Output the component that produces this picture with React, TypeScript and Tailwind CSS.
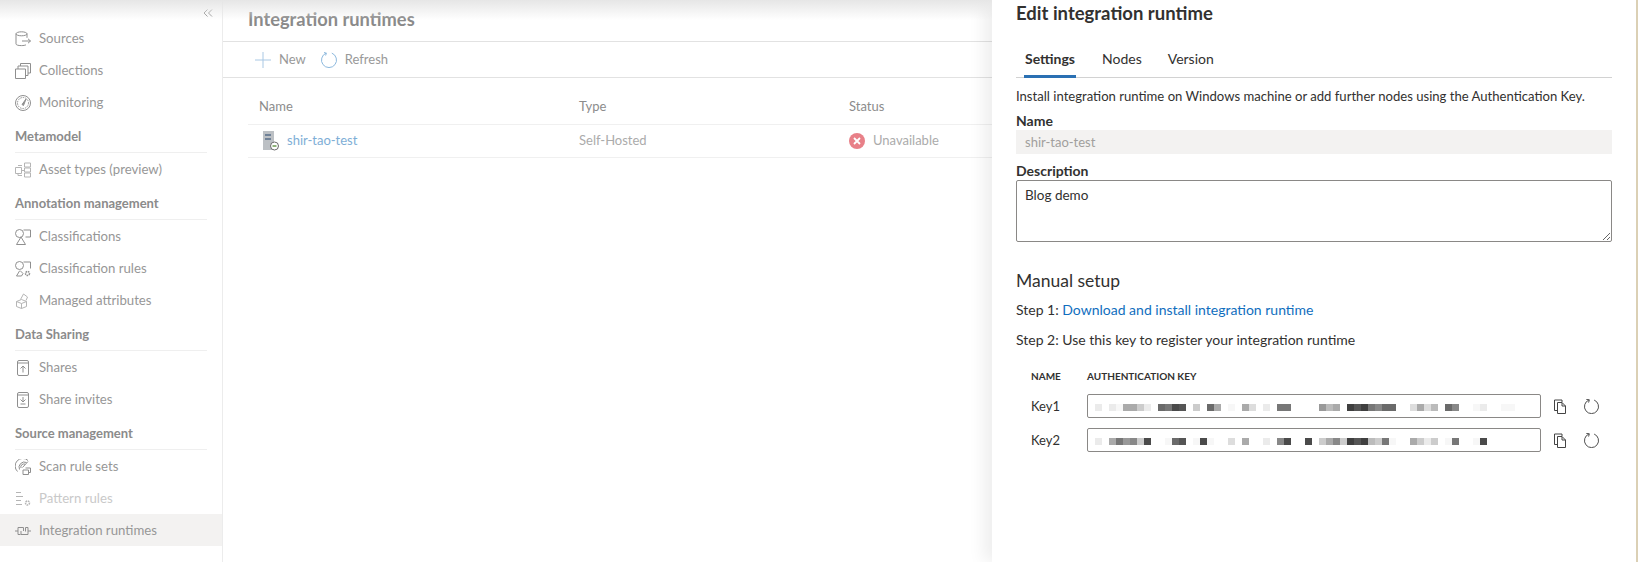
import { ReactNode } from "react";

const stroke = {
  fill: "none",
  stroke: "currentColor",
  strokeWidth: 1,
};

function Icon({ children, className = "" }: { children: ReactNode; className?: string }) {
  return (
    <svg viewBox="0 0 16 16" className={`h-4 w-4 shrink-0 ${className}`} {...stroke}>
      {children}
    </svg>
  );
}

const SourcesIcon = () => (
  <Icon>
    <ellipse cx="6.500" cy="2.800" rx="5.500" ry="2" />
    <path d="M1 2.800v10c0 1.200 2 1.800 5.500 1.800 2 0 3.600-.3 4.500-.8M12 2.800v4M7 10h8.500M13 7.800l2.500 2.200-2.500 2.200" />
  </Icon>
);
const CollectionsIcon = () => (
  <Icon>
    <path d="M.5 6h10v9.500H.5zM3 6V3h10v9.500h-2.500M5.500 3V.5h10v9.500H13" />
  </Icon>
);
const MonitoringIcon = () => (
  <Icon>
    <circle cx="8" cy="8" r="7.500" />
    <circle cx="8" cy="8" r="5.500" strokeDasharray="1.500 1" />
    <path d="M7 9.500l4-5.500-2.500 6.500z" fill="currentColor" />
  </Icon>
);
const AssetTypesIcon = () => (
  <Icon>
    <path d="M.5 5.500h6v6h-6zM3 3.500h4M9.500 1h6v4h-6zM9.500 6h6v4h-6zM9.500 11h6v4h-6zM6.500 8.500h3M3 11.500v2h4" />
  </Icon>
);
const ClassificationsIcon = () => (
  <Icon>
    <circle cx="4.500" cy="4.500" r="4" />
    <path d="M8.500 1h7v7h-5M6 8l4.500 7.500h-9z" />
  </Icon>
);
const ClassificationRulesIcon = () => (
  <Icon>
    <circle cx="4.500" cy="4.500" r="4" />
    <path d="M8.500 1h7v6.500M5 9.500l3 3-1.500 2.500h-5l3-5" />
    <circle cx="12.500" cy="12.500" r="2" strokeDasharray="1.500 .7" strokeWidth="1.500" />
  </Icon>
);
const ManagedAttributesIcon = () => (
  <Icon>
    <path d="M1.500 8.500l5-2 5 2v5l-5 2-5-2zM1.500 8.500l5 2 5-2M6.500 10.500v5M5.500 6.500l3-5.500 4 3-1.500 3.500" />
  </Icon>
);
const SharesIcon = () => (
  <Icon>
    <rect x="2.500" y=".5" width="11" height="15" rx="1.500" />
    <path d="M2.500 3h11M8 12.500V6M5.500 8.500L8 6l2.500 2.500" />
  </Icon>
);
const ShareInvitesIcon = () => (
  <Icon>
    <rect x="2.500" y=".5" width="11" height="15" rx="1.500" />
    <path d="M2.500 3h11M8 5v5M5.500 7.500L8 10l2.500-2.500M5.500 12h5" />
  </Icon>
);
const ScanRuleSetsIcon = () => (
  <Icon>
    <path d="M13 1.500A7.500 7.500 0 0 0 2.500 12.500M11.500 3.500A5.300 5.300 0 0 0 4.500 10.500M10 5.200A3 3 0 0 0 6 9M7.500 8.500L13 2.500" />
    <path d="M8 11h5.500v4.500H8zM10.500 9h5v4.500h-2" />
  </Icon>
);
const PatternRulesIcon = () => (
  <Icon>
    <path d="M1 1.500h5M1 5.500h7M1 9.500h5M1 13.500h6" />
    <circle cx="12.500" cy="12" r="2" strokeDasharray="1.500 .7" strokeWidth="1.500" />
  </Icon>
);
const RuntimesIcon = () => (
  <Icon>
    <path d="M0 8h3M3 4.500v7h2.500M3 4.500h5.500V8M6 8v3.500h7V4.500h-2.500v4M13 8h3" />
  </Icon>
);

type NavItem = { label: string; icon: ReactNode; dim?: boolean; active?: boolean };
type NavSection = { title?: string; items: NavItem[] };

const sections: NavSection[] = [
  {
    items: [
      { label: "Sources", icon: <SourcesIcon /> },
      { label: "Collections", icon: <CollectionsIcon /> },
      { label: "Monitoring", icon: <MonitoringIcon /> },
    ],
  },
  { title: "Metamodel", items: [{ label: "Asset types (preview)", icon: <AssetTypesIcon />, dim: true }] },
  {
    title: "Annotation management",
    items: [
      { label: "Classifications", icon: <ClassificationsIcon /> },
      { label: "Classification rules", icon: <ClassificationRulesIcon /> },
      { label: "Managed attributes", icon: <ManagedAttributesIcon />, dim: true },
    ],
  },
  {
    title: "Data Sharing",
    items: [
      { label: "Shares", icon: <SharesIcon /> },
      { label: "Share invites", icon: <ShareInvitesIcon /> },
    ],
  },
  {
    title: "Source management",
    items: [
      { label: "Scan rule sets", icon: <ScanRuleSetsIcon /> },
      { label: "Pattern rules", icon: <PatternRulesIcon />, dim: true },
      { label: "Integration runtimes", icon: <RuntimesIcon />, active: true },
    ],
  },
];

function Sidebar() {
  return (
    <aside className="flex w-[223px] shrink-0 flex-col border-r border-[#ececec]">
      <div className="flex h-[22px] items-center justify-end pr-[9px] pt-1 text-[#8f8f8f]">
        <svg viewBox="0 0 10 8" className="h-2 w-2.5" {...stroke}>
          <path d="M4.500 .5L1 4l3.500 3.500M9 .5L5.500 4 9 7.500" />
        </svg>
      </div>
      {sections.map((section, i) => (
        <div key={i}>
          {section.title && (
            <div className="mx-[15px] flex h-[35px] items-center border-b border-[#efefef] pt-[3px] text-[13px] font-bold text-[#8b8b8b]">
              {section.title}
            </div>
          )}
          {section.items.map((item) => (
            <div
              key={item.label}
              className={`flex h-8 items-center gap-2 pl-[15px] pt-[2px] ${
                item.active ? "bg-[#f3f2f1]" : ""
              } ${item.dim ? "text-[#b5b5b5]" : "text-[#8f8f8f]"}`}
            >
              {item.icon}
              <span
                className={`text-[13.200px] ${
                  item.label === "Pattern rules" ? "text-[#c9c9c9]" : "text-[#979797]"
                }`}
              >
                {item.label}
              </span>
            </div>
          ))}
        </div>
      ))}
    </aside>
  );
}

function RuntimeList() {
  return (
    <main className="min-w-0 flex-1">
      <div className="flex h-[42px] items-center border-b border-[#e2e2e2] pb-[2px] pl-[25px] text-[18.300px] font-bold text-[#8a8a8a]">
        Integration runtimes
      </div>
      <div className="flex h-9 items-center border-b border-[#e2e2e2] pl-8 text-[13px] text-[#999999]">
        <svg viewBox="0 0 16 16" className="h-4 w-4 text-[#a9c8e4]" {...stroke}>
          <path d="M8 0v16M0 8h16" />
        </svg>
        <span className="ml-2">New</span>
        <svg viewBox="0 0 16 16" className="ml-[15px] h-4 w-4 text-[#8cb8dd]" {...stroke}>
          <path d="M5.200 1.100a7.500 7.500 0 1 0 5.600 0M3 .5l2.400.7-.8 2.300" />
        </svg>
        <span className="ml-2">Refresh</span>
      </div>
      <div className="ml-[25px] text-[13px]">
        <div className="flex h-[47px] items-center border-b border-[#f0f0f0] pt-[11px] text-[#8c8c8c]">
          <span className="w-[331px] pl-[11px]">Name</span>
          <span className="w-[270px]">Type</span>
          <span>Status</span>
        </div>
        <div className="flex h-[33px] items-center border-b border-[#f0f0f0] text-[#ababab]">
          <div className="flex w-[331px] items-center gap-2 pl-[15px]">
            <svg viewBox="0 0 16 20" className="h-5 w-4">
              <rect x="0" y="0" width="11" height="19" fill="#bcc0c4" />
              <rect x="2" y="3" width="6" height="2" fill="#6f8197" />
              <rect x="2" y="7" width="6" height="2" fill="#6f8197" />
              <circle cx="11.500" cy="15" r="4" fill="#fff" stroke="#6b6b6b" />
              <path d="M9.500 15h4" stroke="#8fb27a" strokeWidth="2" />
            </svg>
            <span className="text-[#7eaed6]">shir-tao-test</span>
          </div>
          <span className="w-[270px]">Self-Hosted</span>
          <div className="flex items-center gap-2">
            <svg viewBox="0 0 16 16" className="h-4 w-4">
              <circle cx="8" cy="8" r="8" fill="#e88088" />
              <path d="M5 5l6 6M11 5l-6 6" stroke="#fff" strokeWidth="1.800" />
            </svg>
            <span>Unavailable</span>
          </div>
        </div>
      </div>
    </main>
  );
}

const pixelTones: Record<string, string> = {
  "3": "bg-[#3f3f3f]",
  "4": "bg-[#4a4a4a]",
  "5": "bg-[#555555]",
  "6": "bg-[#6a6a6a]",
  "7": "bg-[#777777]",
  "8": "bg-[#888888]",
  "9": "bg-[#999999]",
  a: "bg-[#aaaaaa]",
  b: "bg-[#bbbbbb]",
  c: "bg-[#cccccc]",
  d: "bg-[#dddddd]",
  e: "bg-[#ebebeb]",
  f: "bg-[#f7f7f7]",
  ".": "bg-white",
};

// the key value is pixelated in the screenshot, one char per block
const key1 = "e.efaace.6745.c.6a.f.ad.e.77....9ba.3537866..dadb.68..fe..ff";
const key2 = "e.a798c4..f65.f4f..d.a..e.84..4.ca8c353bc7f..acec.f7..f4";

function KeyRow({ name, value }: { name: string; value: string }) {
  return (
    <div className="flex items-center">
      <span className="w-[71px] pl-[15px] pt-[2px] text-[13px]">{name}</span>
      <div className="flex h-6 w-[454px] items-center rounded-[2px] border border-[#8a8886] pl-[7px] pt-[3px]">
        {value.split("").map((tone, i) => (
          <span key={i} className={`h-[7px] w-[7px] ${pixelTones[tone]}`} />
        ))}
      </div>
      <svg viewBox="0 0 14 15" className="ml-3 h-[15px] w-[14px] text-[#444444]" {...stroke}>
        <path d="M9 3V1H1.500v10.500H4M4.500 3.500H9l3.500 3.500v7.500h-8zM9 3.500V7h3.500" />
      </svg>
      <svg viewBox="0 0 16 16" className="ml-[17px] h-[15px] w-[15px] text-[#444444]" {...stroke}>
        <path d="M5.200 1.100a7.500 7.500 0 1 0 5.600 0" />
        <path d="M2.500 .5l3.200.3-.8 3" />
      </svg>
    </div>
  );
}

function EditPanel() {
  return (
    <section className="relative flex w-[646px] shrink-0 flex-col border-r-2 border-[#dbd0b5] bg-white px-6 text-[14px] text-[#323130] shadow-[-8px_0_16px_rgba(0,0,0,0.07)]">
      <h2 className="flex h-7 items-center text-[18.500px] font-bold">Edit integration runtime</h2>
      <div className="mt-[20px] flex h-[30px] gap-[26px] border-b border-[#d2d2d2] pl-2">
        <span className="h-[30px] border-b-[3px] border-[#2a70b3] px-[1px] font-bold">Settings</span>
        <span>Nodes</span>
        <span>Version</span>
      </div>
      <p className="mt-[8px] text-[13.100px] leading-5">
        Install integration runtime on Windows machine or add further nodes using the Authentication Key.
      </p>
      <label className="mt-[6px] font-bold leading-[18px]">Name</label>
      <input
        disabled
        value="shir-tao-test"
        className="h-6 bg-[#f3f2f1] px-[9px] text-[13px] text-[#a19f9d]"
      />
      <label className="mt-[8px] font-bold leading-[18px]">Description</label>
      <textarea
        readOnly
        defaultValue="Blog demo"
        className="h-[62px] rounded-[2px] border border-[#8a8886] px-[8px] py-[4px] text-[13.500px] text-[#323130] outline-none"
      />
      <h3 className="mt-[27px] text-[17.500px] leading-6">Manual setup</h3>
      <p className="mt-[7px] leading-5">
        Step 1: <span className="text-[#106ebe]">Download and install integration runtime</span>
      </p>
      <p className="mt-[10px] leading-5">Step 2: Use this key to register your integration runtime</p>
      <div className="mt-[17px] flex h-[18px] items-center text-[10px] font-bold">
        <span className="w-[71px] pl-[15px]">NAME</span>
        <span>AUTHENTICATION KEY</span>
      </div>
      <div className="mt-[9px] flex flex-col gap-[10px]">
        <KeyRow name="Key1" value={key1} />
        <KeyRow name="Key2" value={key2} />
      </div>
    </section>
  );
}

export default function App() {
  return (
    <div className="relative flex h-[562px] w-[1638px] overflow-hidden bg-white font-['Lato',sans-serif]">
      <Sidebar />
      <RuntimeList />
      <EditPanel />
      {/* shade from the page header above the blade */}
      <div className="pointer-events-none absolute left-0 top-0 h-[20px] w-[992px] bg-gradient-to-b from-[#e6e6e6] to-transparent" />
    </div>
  );
}
